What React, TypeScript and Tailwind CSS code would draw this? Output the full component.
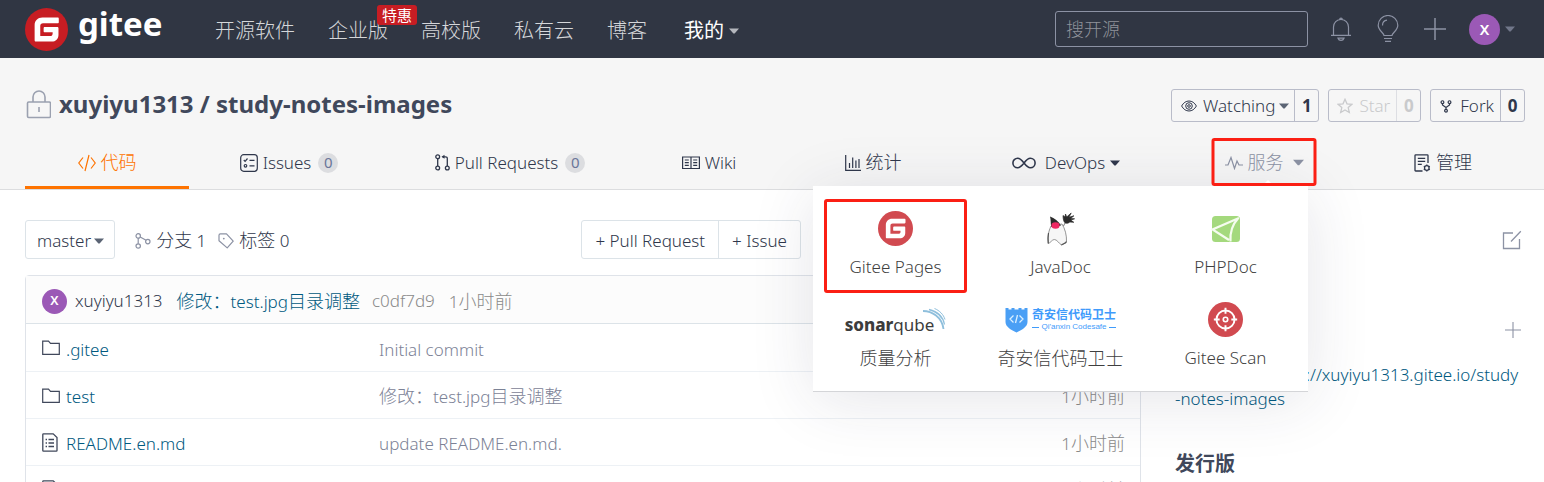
import React from "react";

type IconProps = { className?: string };

const Caret = ({ className = "" }: IconProps) => (
  <svg viewBox="0 0 10 6" className={`h-[6px] w-[10px] shrink-0 ${className}`} fill="currentColor" aria-hidden="true">
    <path d="M0 0.5h10L5.6 5.5h-1.2z" />
  </svg>
);

const GiteeMark = ({ className = "", color }: IconProps & { color: string }) => (
  <svg viewBox="0 0 42 42" className={className} aria-hidden="true">
    <circle cx="21" cy="21" r="21" fill={color} />
    <path
      d="M32 9.300H17C12.500 9.300 9.400 12.400 9.400 16.900V31.500c0 .8.5 1.300 1.200 1.300h15.500c3.900 0 6.600-2.800 6.600-6.500v-6.500c0-.8-.5-1.200-1.200-1.200H19.300c-.7 0-1.100.5-1.100 1.200v2.900c0 .7.4 1.100 1.100 1.100h7.700v1.100c0 1.600-.9 2.500-2.500 2.500H14.900V17.600c0-1.700 1-2.700 2.700-2.700H32c.6 0 1-.4 1-1v-3.500c0-.7-.4-1.100-1-1.100z"
      fill="#fff"
    />
  </svg>
);

const line = { fill: "none", stroke: "currentColor", "aria-hidden": true } as const;

const Bell = () => (
  <svg {...line} viewBox="0 0 22 26" className="h-[26px] w-[22px]" strokeWidth="1.2">
    <path d="M1 19.400h20M3.500 19.400V11a7.500 7.500 0 0 1 15 0v8.400M9.700 3.400a1.300 1.300 0 1 1 2.600 0M8 22.200c.5 1.400 1.500 2.100 3 2.100s2.500-.7 3-2.100z" />
  </svg>
);
const Bulb = () => (
  <svg {...line} viewBox="0 0 22 28" className="h-[28px] w-[22px]" strokeWidth="1.2">
    <path d="M7 20.500c0-2.500-5.800-5-5.800-10.200a9.800 9.800 0 0 1 19.600 0c0 5.200-5.800 7.700-5.800 10.200zM7 23.500h8M8 26.300h6M5.500 10.500c0-3 2-5 4.500-5.300" />
  </svg>
);
const Plus = ({ className = "" }: IconProps) => (
  <svg {...line} viewBox="0 0 22 22" className={className} strokeWidth="1.500">
    <path d="M11 0v22M0 11h22" />
  </svg>
);
const Lock = () => (
  <svg {...line} viewBox="0 0 26 30" className="h-[30px] w-[26px] text-[#9ba1b0]" strokeWidth="1.600">
    <rect x="2.500" y="13" width="23" height="15.500" rx="1.200" />
    <path d="M8 13V8a6 6 0 0 1 12 0v5M14 18v5" />
  </svg>
);
const Eye = () => (
  <svg {...line} viewBox="0 0 16 12" className="h-[12px] w-[16px]" strokeWidth="1">
    <path d="M.6 6C2.500 2.700 5 1 8 1s5.500 1.700 7.400 5C13.500 9.300 11 11 8 11S2.500 9.300.6 6z" />
    <circle cx="8" cy="6" r="3.300" />
    <circle cx="8" cy="6" r="1.300" />
  </svg>
);
const Star = () => (
  <svg {...line} viewBox="0 0 16 16" className="h-[16px] w-[16px]" strokeWidth="1.300">
    <path d="M8 1.300l2 4.500 4.900.5-3.700 3.300 1.100 4.900L8 12l-4.300 2.500 1.100-4.900L1.100 6.300 6 5.800z" />
  </svg>
);
const Fork = () => (
  <svg {...line} viewBox="0 0 12 14" className="h-[13px] w-[12px]" strokeWidth="1.300">
    <circle cx="2.200" cy="2.300" r="1.500" />
    <circle cx="9.800" cy="2.300" r="1.500" />
    <circle cx="6" cy="11.500" r="1.500" />
    <path d="M2.200 3.800v1.500L6 8l3.800-2.700V3.800M6 8v2" />
  </svg>
);
const Code = () => (
  <svg {...line} viewBox="0 0 18 18" className="h-[18px] w-[18px]" strokeWidth="1.200">
    <path d="M5 3.500L.8 9 5 14.500M13 3.500L17.200 9 13 14.500M11 1L7 17" />
  </svg>
);
const Issues = () => (
  <svg {...line} viewBox="0 0 18 18" className="h-[18px] w-[18px]" strokeWidth="1.200">
    <rect x=".7" y=".7" width="16.600" height="16.600" rx="3" />
    <path d="M3.800 6l1.300 1.300L7.500 4.500M9.500 6.300h5M9.500 11.800h5" />
    <circle cx="5.500" cy="11.800" r="1.300" />
  </svg>
);
const PullRequest = () => (
  <svg {...line} viewBox="0 0 15 17" className="h-[17px] w-[15px]" strokeWidth="1.300">
    <circle cx="2.700" cy="2.800" r="1.900" />
    <circle cx="2.700" cy="14" r="1.900" />
    <circle cx="12.300" cy="14" r="1.900" />
    <path d="M2.700 4.700v7.400M12.300 12.100V4.500c0-1.100-.6-1.700-1.700-1.700H7.500" />
    <path d="M9.500.8v4L6.500 2.800z" fill="currentColor" stroke="none" />
  </svg>
);
const Book = () => (
  <svg {...line} viewBox="0 0 18 14" className="h-[14px] w-[18px]" strokeWidth="1.200">
    <path d="M.6 1h16.800v11.500H.6zM9 1v12M2.800 4h4M2.800 6.700h4M2.800 9.400h4M11.200 4h4M11.200 6.700h4M11.200 9.400h4" />
  </svg>
);
const Chart = () => (
  <svg {...line} viewBox="0 0 16 16" className="h-[16px] w-[16px]" strokeWidth="1.200">
    <path d="M.7 0v15.300H16M4.500 13V8M7.700 13V2.500M10.900 13V5.500M14 13V4" />
  </svg>
);
const Infinity = () => (
  <svg {...line} viewBox="0 0 24 12" className="h-[12px] w-[24px]" strokeWidth="1.600">
    <path d="M12 6C9.500 2.800 8 1.200 5.700 1.200a4.800 4.800 0 0 0 0 9.600C8 10.800 9.500 9.200 12 6s4-4.800 6.300-4.800a4.800 4.800 0 0 1 0 9.600C16 10.800 14.500 9.200 12 6z" />
  </svg>
);
const Pulse = () => (
  <svg {...line} viewBox="0 0 18 14" className="h-[14px] w-[18px]" strokeWidth="1.200">
    <path d="M0 9h3L6 1.500l3.500 11L12 5l2 4h4" />
  </svg>
);
const Manage = () => (
  <svg {...line} viewBox="0 0 17 18" className="h-[18px] w-[17px]" strokeWidth="1.300">
    <path d="M8.500 17H1.700C1.200 17 1 16.800 1 16.300V1.500C1 1 1.200.8 1.700.8h11.600c.5 0 .7.2.7.7V9M3.800 4.300h7.400M3.800 7.300h7.400M3.800 10.300h4" />
    <circle cx="12.800" cy="14" r="2.300" />
    <path d="M12.800 10.500v1.200M12.800 16.300v1.200M9.800 12.200l1 .6M14.800 15.200l1 .6M15.800 12.200l-1 .6M10.800 15.200l-1 .6" />
  </svg>
);
const Branch = () => (
  <svg {...line} viewBox="0 0 16 16" className="h-[16px] w-[16px]" strokeWidth="1.200">
    <circle cx="3.200" cy="2.900" r="2.200" />
    <circle cx="3.200" cy="13" r="2.200" />
    <circle cx="12.800" cy="8.600" r="2.200" />
    <path d="M3.200 5.100v5.700M5.200 3.900l5.900 3.300" />
  </svg>
);
const Tag = () => (
  <svg {...line} viewBox="0 0 16 16" className="h-[16px] w-[16px]" strokeWidth="1.200">
    <path d="M1 2.200C1 1.200 1.500.8 2.400.8h6.100l6.700 7.400-6 6.700L1 7.800z" strokeLinejoin="round" />
    <circle cx="5.800" cy="5.600" r=".9" fill="currentColor" stroke="none" />
  </svg>
);
const Edit = () => (
  <svg {...line} viewBox="0 0 20 20" className="h-[20px] w-[20px]" strokeWidth="1.300">
    <path d="M11 3H1.500v15.500h16V9M9 11.500L18.800 1.200" />
  </svg>
);
const Folder = () => (
  <svg {...line} viewBox="0 0 18 16" className="h-[16px] w-[18px]" strokeWidth="1.200">
    <path d="M.7 14.400V1.200h5.800l2 2.100h8.800v11.100z" />
  </svg>
);
const FileIcon = () => (
  <svg {...line} viewBox="0 0 16 19" className="h-[19px] w-[16px]" strokeWidth="1.300">
    <path d="M.8 1.500C.8 1 1 .8 1.500.8h9.700L15 4.500v13c0 .5-.2.700-.7.700H1.500c-.5 0-.7-.2-.7-.7zM6.500 6.500h5.500M6.500 10h5.500M6.500 13.500h5.500M3.600 6.500h1.400M3.600 10h1.400M3.600 13.500h1.400" />
  </svg>
);

const Duke = () => (
  <svg viewBox="0 0 30 36" className="h-[36px] w-[30px]" aria-hidden="true">
    <path d="M5 15C1.800 22 1.500 28 2.300 32.500c2.200-.5 3.700-4 6-4 2.700 0 4.200 3.500 7.200 5.500 1-1 4.500-1.500 5-3.500.3-6-1.500-13-4.500-17.500z" fill="#f6f6f6" stroke="#8a8a8a" strokeWidth=".9" />
    <path d="M2.500 22C2 25 2 29 2.300 32.500M15.500 34c1-1 4.500-1.500 5-3.500" fill="none" stroke="#555" strokeWidth="1.200" />
    <path d="M17.500 15l2.500-5" stroke="#777" />
    <path d="M4 5.500c4.500 1.500 8.500 4.500 11 9-2.500 1-8 2-9.800 1.300C4.500 12 5 9 4 5.500z" fill="#2b2b2b" />
    <path d="M17 4.500l2 1.500.5-3 1.200 3 4.500-4-2.300 4.300 5-1.500-3.300 2.700 4 .3-3.800 1.300 3 2.200-4-.3c-1 1-2.800 1.600-4.500 1-1.500-.8-2.200-3.500-2.300-7.500z" fill="#2b2b2b" stroke="#2b2b2b" strokeWidth=".7" />
    <ellipse cx="9.500" cy="14.500" rx="4.100" ry="3.300" fill="#ee2762" />
  </svg>
);
const PhpDoc = () => (
  <svg viewBox="0 0 32 30" className="h-[30px] w-[32px]" aria-hidden="true">
    <rect x="2" y="2" width="28" height="26" rx="3.500" fill="#a4d97d" />
    <path d="M29 4L2.500 15.500 19 26M28 4.500C22 11 19.800 18 20.500 27.500" fill="none" stroke="#f5fcef" strokeWidth="2.200" />
  </svg>
);
const Scan = () => (
  <svg viewBox="0 0 36 36" className="h-[35px] w-[35px]" aria-hidden="true">
    <circle cx="18" cy="18" r="18" fill="#d14a50" />
    <g fill="none" stroke="#fff" strokeWidth="2">
      <circle cx="18" cy="18" r="9.300" />
      <circle cx="18" cy="18" r="2.300" strokeWidth="1.700" />
      <path d="M18 6v6M18 24v6M6 18h6M24 18h6" />
    </g>
  </svg>
);
const Sonar = () => (
  <span className="flex items-start pt-1 font-normal">
    <span className="pt-[6px] text-[17px] leading-6 text-[#3c3c3c]">
      <b className="font-extrabold">sonar</b>
      <span>qube</span>
    </span>
    <svg viewBox="0 0 24 24" className="-ml-3 h-[24px] w-[24px]" fill="none" stroke="#8fbfdc" aria-hidden="true">
      <path d="M1 4c9 0 19 6 20.500 18" strokeWidth="1.800" />
      <path d="M7 2.500c8 2 14 7 15.500 15" strokeWidth="1.300" />
      <path d="M12.500 1.500c5 2 9 6 10.500 11" strokeWidth="1" />
    </svg>
  </span>
);
const Qianxin = () => (
  <span className="flex items-center gap-1 font-normal text-[#3f9bfb]">
    <svg viewBox="0 0 22 26" className="h-[26px] w-[23px]" aria-hidden="true">
      <path d="M0 1h3v1.500h3V1h3v1.500h4V1h3v1.500h3V1h3v14c0 5-6 8-11 10.500C6 23 0 20 0 15z" fill="#4a9ff5" />
      <path d="M8 8.500L4.500 12 8 15.500M14 8.500l3.500 3.500-3.500 3.500M12 8l-2 8" fill="none" stroke="#d9efff" strokeWidth="1.300" />
    </svg>
    <span className="flex flex-col">
      <b className="text-[12px] leading-[15px]">奇安信代码卫士</b>
      <span className="flex items-center justify-between font-['Liberation_Sans',sans-serif] text-[8px] leading-[10px]">
        <i className="h-px w-[7px] bg-current" />
        Qi&apos;anxin Codesafe
        <i className="h-px w-[7px] bg-current" />
      </span>
    </span>
  </span>
);

const services = [
  { name: "Gitee Pages", icon: <GiteeMark className="h-[35px] w-[35px]" color="#d14a50" />, zh: false, marked: true },
  { name: "JavaDoc", icon: <Duke />, zh: false },
  { name: "PHPDoc", icon: <PhpDoc />, zh: false },
  { name: "质量分析", icon: <Sonar />, zh: true },
  { name: "奇安信代码卫士", icon: <Qianxin />, zh: true },
  { name: "Gitee Scan", icon: <Scan />, zh: false },
];

const files = [
  { name: ".gitee", icon: <Folder />, message: "Initial commit", zh: false },
  { name: "test", icon: <Folder />, message: "", zh: true },
  { name: "README.en.md", icon: <FileIcon />, message: "update README.en.md.", zh: false },
  { name: "README.md", icon: <FileIcon />, message: "update README.md.", zh: false },
];

const CommitText = () => (
  <>
    <span className="text-[18px]">修改：</span>test.jpg<span className="text-[18px]">目录调整</span>
  </>
);

const Ago = () => (
  <>
    1<span className="text-[18px]">小时前</span>
  </>
);

const Count = () => (
  <span className="ml-[2px] flex h-5 w-5 items-center justify-center rounded-full bg-[#dcdde0] text-[15px] font-normal text-[#6a7699]">0</span>
);

function TopBar() {
  return (
    <header className="flex h-[58px] items-center bg-[#303643] pr-[29px] pl-[25px] text-[20px] text-[#d5d7da]">
      <a href="#home" className="flex items-center gap-[10px] text-white">
        <GiteeMark className="h-[43px] w-[43px]" color="#c71d23" />
        <span className="w-[84px] pb-[10px] text-[33px] leading-10 font-bold">gitee</span>
      </a>
      <nav className="ml-[53px] flex items-center gap-[33px] pt-1 whitespace-nowrap">
        <a href="#explore">开源软件</a>
        <a href="#enterprise" className="relative">
          企业版
          <span className="absolute -top-[11px] left-[49px] z-10 h-5 w-10 rounded-[3px] bg-[#c71d23] text-center text-[15px] leading-5 font-normal text-white">
            特惠
          </span>
        </a>
        <a href="#edu">高校版</a>
        <a href="#cloud">私有云</a>
        <a href="#blog">博客</a>
        <a href="#mine" className="ml-1 flex items-center gap-[5px] font-normal text-white">
          我的
          <Caret className="text-[#b4b7bd]" />
        </a>
      </nav>
      <div className="ml-auto flex items-center text-[#8c92a4]">
        <input
          type="search"
          aria-label="搜开源"
          placeholder="搜开源"
          className="h-9 w-[253px] rounded-[3px] border border-[#8c92a4] bg-transparent px-[10px] text-[18px] outline-none placeholder:text-[#8f929a]"
        />
        <button type="button" aria-label="通知" className="ml-[22px]"><Bell /></button>
        <button type="button" aria-label="建议" className="ml-[25px]"><Bulb /></button>
        <button type="button" aria-label="新建" className="ml-[25px]"><Plus className="h-[22px] w-[22px]" /></button>
        <button type="button" aria-label="用户菜单" className="ml-[23px] flex items-center gap-[5px]">
          <span className="flex h-[31px] w-[31px] items-center justify-center rounded-full bg-[#9b59b6] text-[15px] font-semibold text-white">X</span>
          <Caret className="text-[#71778a]" />
        </button>
      </div>
    </header>
  );
}

function RepoActions() {
  const group = "flex h-[33px] items-center rounded-[3px] border border-[#b9bcc9] text-[17px]";
  return (
    <div className="flex gap-[9px]">
      <div className={group}>
        <button type="button" className="flex items-center gap-[6px] pt-px pr-[5px] pl-[9px]">
          <Eye />
          <span className="flex items-center gap-1">Watching <Caret className="text-[#5b6474]" /></span>
        </button>
        <a href="#watchers" className="flex h-full w-6 items-center justify-center border-l border-[#b9bcc9] pt-px font-bold">1</a>
      </div>
      <div className={`${group} text-[#c9cacc]`}>
        <button type="button" className="flex items-center gap-[6px] pt-px pr-[6px] pl-2">
          <Star /> Star
        </button>
        <a href="#stars" className="flex h-full w-6 items-center justify-center border-l border-[#dddee3] pt-px font-bold">0</a>
      </div>
      <div className={group}>
        <button type="button" className="flex items-center gap-2 pt-px pr-[6px] pl-[9px]">
          <Fork /> Fork
        </button>
        <a href="#forks" className="flex h-full w-6 items-center justify-center border-l border-[#b9bcc9] pt-px font-bold">0</a>
      </div>
    </div>
  );
}

function ServicesMenu() {
  return (
    <div className="absolute top-[calc(100%-3px)] right-[47px] z-20 w-[495px] border-b border-[#d4d5d8] bg-white pt-[14px] pb-[9px] text-[#3f3f3f] shadow-[0_8px_60px_rgba(40,44,70,0.12)]">
      <ul className="grid grid-cols-3">
        {services.map((s) => (
          <li key={s.name} className="relative h-[91px]">
            <a href="#service" className="flex flex-col items-center">
              <span className="flex h-[57px] items-center">{s.icon}</span>
              <span className={s.zh ? "text-[18px] leading-5" : "text-[17px] leading-5"}>{s.name}</span>
            </a>
            {s.marked && <span className="pointer-events-none absolute -top-px left-[11px] h-[94px] w-[143px] rounded-[3px] border-3 border-[#fb1f14]" />}
          </li>
        ))}
      </ul>
    </div>
  );
}

function Tabs() {
  const tab = "flex items-center justify-center gap-[5px]";
  return (
    <nav className="relative -mr-[6px] flex h-[53px] text-[17px] whitespace-nowrap">
      <a href="#code" className={`${tab} flex-[164] border-b-3 border-[#fe7300] pt-[3px] text-[#fe7300]`}>
        <Code /> <span className="text-[18px]">代码</span>
      </a>
      <a href="#issues" className={`${tab} flex-[200]`}><Issues /> Issues <Count /></a>
      <a href="#pulls" className={`${tab} flex-[242]`}><PullRequest /> Pull Requests <Count /></a>
      <a href="#wiki" className={`${tab} flex-[156]`}><Book /> Wiki</a>
      <a href="#stats" className={`${tab} flex-[172]`}><Chart /> <span className="text-[18px]">统计</span></a>
      <a href="#devops" className={`${tab} flex-[214]`}><Infinity /> <span className="ml-1">DevOps</span> <Caret /></a>
      <div className="relative flex flex-[182]">
        <button type="button" className={`${tab} flex-1 text-[#8c92a4]`}>
          <Pulse /> <span className="mr-1 text-[18px]">服务</span> <Caret className="h-[7px] w-[11px]" />
        </button>
        <ServicesMenu />
        <span className="absolute bottom-[3px] left-1/2 z-30 ml-[-2px] h-0 w-0 border-x-6 border-b-6 border-x-transparent border-b-white" />
        <span className="pointer-events-none absolute top-[2px] left-1/2 z-30 h-[48px] w-[105px] -translate-x-1/2 rounded-[3px] border-3 border-[#fb1f14]" />
      </div>
      <a href="#manage" className={`${tab} flex-[176]`}><Manage /> <span className="text-[18px]">管理</span></a>
    </nav>
  );
}

export default function App() {
  return (
    <div className="h-screen overflow-hidden bg-white font-['Noto_Sans','Noto_Sans_CJK_SC',sans-serif] text-[17px] font-light text-[#2f374b]">
      <TopBar />
      <section className="border-b border-[#dcdddf] bg-[#f6f6f6] pr-[19px] pl-[25px]">
        <div className="flex h-[78px] items-center justify-between pt-[17px]">
          <h1 className="flex items-center gap-2 pb-[3px] text-[24px] font-bold text-[#40485b]">
            <Lock />
            <span><a href="#owner">xuyiyu1313</a> / <a href="#repo">study-notes-images</a></span>
          </h1>
          <RepoActions />
        </div>
        <Tabs />
      </section>

      <main className="flex gap-[34px] pt-[30px] pr-[19px] pl-[25px]">
        <section className="min-w-0 flex-1">
          <div className="flex items-center">
            <button type="button" className="flex h-[39px] items-center gap-[3px] rounded-[3px] border border-[#dce3e8] pt-[2px] pr-[10px] pl-[11px]">
              master <Caret className="text-[#5b6474]" />
            </button>
            <a href="#branches" className="ml-5 flex items-center gap-[5px] pt-[2px]">
              <span className="text-[#8c92a4]"><Branch /></span>
              <span><span className="text-[18px]">分支</span> 1</span>
            </a>
            <a href="#tags" className="ml-3 flex items-center gap-[5px] pt-[2px]">
              <span className="text-[#8c92a4]"><Tag /></span>
              <span><span className="text-[18px]">标签</span> 0</span>
            </a>
            <div className="mr-[340px] ml-auto flex h-[39px] rounded-[3px] border border-[#dce3e8]">
              <button type="button" className="px-[13px] pt-[2px]">+ Pull Request</button>
              <button type="button" className="border-l border-[#dce3e8] px-[13px] pt-[2px]">+ Issue</button>
            </div>
          </div>

          <div className="mt-4 rounded-t-[4px] border border-[#dfe3e9]">
            <div className="flex h-[48px] items-center border-b border-[#dce3e8] bg-[#fcfcfc] px-4 pt-[3px] whitespace-nowrap">
              <span className="flex h-[25px] w-[25px] items-center justify-center rounded-full bg-[#9b59b6] text-[13px] font-semibold text-white">X</span>
              <a href="#owner" className="ml-2">xuyiyu1313</a>
              <a href="#commit" className="ml-[14px] text-[#005980]"><CommitText /></a>
              <a href="#sha" className="ml-3 text-[#8a8a8a]">c0df7d9</a>
              <span className="ml-[14px] text-[#8a8a8a]"><Ago /></span>
            </div>
            <table className="w-full table-fixed text-left">
              <tbody>
                {files.map((f) => (
                  <tr key={f.name} className="h-[47px] border-b border-[#edf1f5]">
                    <td className="w-[353px] pt-1 pl-4">
                      <a href="#file" className="flex items-center gap-[6px] text-[#005980]">
                        <span className="w-[18px] pb-[2px] text-[#40485b]">{f.icon}</span>
                        {f.name}
                      </a>
                    </td>
                    <td className="pt-1 text-[#7c8296]">{f.zh ? <CommitText /> : f.message}</td>
                    <td className="w-[120px] pt-1 pr-[15px] text-right text-[#8a8a8a]"><Ago /></td>
                  </tr>
                ))}
              </tbody>
            </table>
          </div>
        </section>

        <aside className="w-[350px]">
          <div className="flex h-[39px] items-center justify-end pr-[3px] text-[#8c92a4]">
            <button type="button" aria-label="编辑"><Edit /></button>
          </div>
          <div className="mt-[61px] flex justify-end pr-1 text-[#8c92a4]">
            <button type="button" aria-label="添加" className="py-[2px]"><Plus className="h-4 w-4" /></button>
          </div>
          <p className="mt-[23px] indent-[91px] leading-6 whitespace-nowrap">
            <a href="#pages" className="text-[#005980]">https://xuyiyu1313.gitee.io/study<br />-notes-images</a>
          </p>
          <h2 className="mt-10 text-[20px] leading-[26px] font-bold text-[#40485b]">发行版</h2>
        </aside>
      </main>
    </div>
  );
}
